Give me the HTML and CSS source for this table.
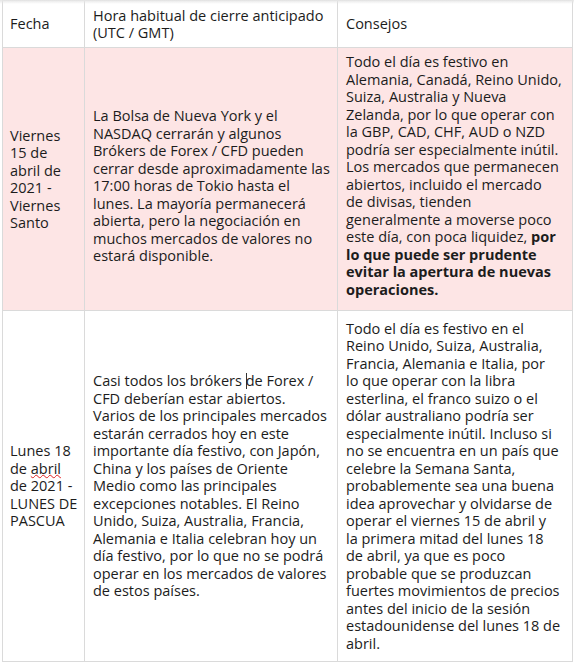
FILE: index.html
```html
<!DOCTYPE html>
<html lang="es">
<head>
<meta charset="utf-8">
<title>Festivos de Semana Santa</title>
<link rel="stylesheet" href="styles.css">
</head>
<body>
<div class="page">
  <table class="holidays">
    <colgroup>
      <col class="c-date">
      <col class="c-hour">
      <col class="c-tips">
    </colgroup>
    <thead>
      <tr class="head-row">
        <th>Fecha</th>
        <th>Hora habitual de cierre anticipado<br>(UTC / GMT)</th>
        <th>Consejos</th>
      </tr>
    </thead>
    <tbody>
      <tr class="row-good-friday">
        <td>Viernes<br>15 de<br>abril de<br>2021 -<br>Viernes<br>Santo</td>
        <td class="shift-down">La Bolsa de Nueva York y el<br>NASDAQ cerrarán y algunos<br>Brókers de Forex / CFD pueden<br>cerrar desde aproximadamente las<br>17:00 horas de Tokio hasta el<br>lunes. La mayoría permanecerá<br>abierta, pero la negociación en<br>muchos mercados de valores no<br>estará disponible.</td>
        <td class="shift-up">Todo el día es festivo en<br>Alemania, Canadá, Reino Unido,<br>Suiza, Australia y Nueva<br>Zelanda, por lo que operar con<br>la GBP, CAD, CHF, AUD o NZD<br>podría ser especialmente inútil.<br>Los mercados que permanecen<br>abiertos, incluido el mercado<br>de divisas, tienden<br>generalmente a moverse poco<br>este día, con poca liquidez, <strong>por<br>lo que puede ser prudente<br>evitar la apertura de nuevas<br>operaciones.</strong></td>
      </tr>
      <tr class="row-easter-monday">
        <td>Lunes 18<br>de <span class="spell">abril</span><br>de 2021 -<br>LUNES DE<br>PASCUA</td>
        <td>Casi todos los brókers <span class="caret"></span>de Forex /<br>CFD deberían estar abiertos.<br>Varios de los principales mercados<br>estarán cerrados hoy en este<br>importante día festivo, con Japón,<br>China y los países de Oriente<br>Medio como las principales<br>excepciones notables. El Reino<br>Unido, Suiza, Australia, Francia,<br>Alemania e Italia celebran hoy un<br>día festivo, por lo que no se podrá<br>operar en los mercados de valores<br>de estos países.</td>
        <td>Todo el día es festivo en el<br>Reino Unido, Suiza, Australia,<br>Francia, Alemania e Italia, por<br>lo que operar con la libra<br>esterlina, el franco suizo o el<br>dólar australiano podría ser<br>especialmente inútil. Incluso si<br>no se encuentra en un país que<br>celebre la Semana Santa,<br>probablemente sea una buena<br>idea aprovechar y olvidarse de<br>operar el viernes 15 de abril y<br>la primera mitad del lunes 18<br>de abril, ya que es poco<br>probable que se produzcan<br>fuertes movimientos de precios<br>antes del inicio de la sesión<br>estadounidense del lunes 18 de<br>abril.</td>
      </tr>
    </tbody>
  </table>
  <div class="top-shadow"></div>
</div>
</body>
</html>
```

FILE: styles.css
```css
html, body {
  margin: 0;
  padding: 0;
  background: #ffffff;
}

.page {
  position: relative;
  width: 574px;
  height: 665px;
  overflow: hidden;
  font-family: "Open Sans", "Noto Sans", sans-serif;
  font-size: 14.5px;
  line-height: 17.5px;
  color: #1c1c1c;
}

.holidays {
  margin-left: 2px;
  width: 570px;
  table-layout: fixed;
  border-collapse: collapse;
}

.c-date { width: 82px; }
.c-hour { width: 253px; }
.c-tips { width: 235px; }

.holidays th,
.holidays td {
  border: 1px solid #dadada;
  padding: 5px 1px 5px 8px;
  vertical-align: middle;
  text-align: left;
  font-weight: normal;
  white-space: nowrap;
}

.holidays td:first-child,
.holidays th:first-child {
  padding-left: 7px;
}

.head-row { height: 47px; }
.head-row th { padding-top: 3px; padding-bottom: 3px; }

.row-good-friday { height: 263px; }
.row-good-friday td { background: #fde5e5; }
.row-easter-monday { height: 351px; }

.holidays td.shift-down { padding-top: 19px; }
.holidays td.shift-up { padding-bottom: 12px; }

.holidays strong { font-weight: bold; }

.spell {
  text-decoration: underline wavy #e02020;
  text-decoration-thickness: 1px;
  text-underline-offset: 0;
}

.caret {
  display: inline-block;
  width: 1px;
  height: 16px;
  background: #333;
  vertical-align: -3px;
  margin-right: -1px;
}

.top-shadow {
  position: absolute;
  left: 0;
  top: 0;
  width: 100%;
  height: 4px;
  background: linear-gradient(#e6e6e6, rgba(255,255,255,0));
}
```
